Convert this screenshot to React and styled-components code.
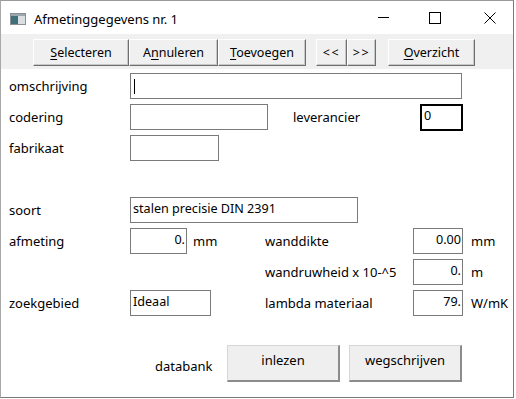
import React from "react";
import styled, { createGlobalStyle } from "styled-components";

const GlobalStyle = createGlobalStyle`
  html, body {
    margin: 0;
    padding: 0;
    background: #ffffff;
  }
  body {
    font-family: "Noto Sans", "Segoe UI", "Liberation Sans", sans-serif;
    color: #000;
  }
`;

const Window = styled.div`
  width: 514px;
  height: 398px;
  box-sizing: border-box;
  display: flex;
  flex-direction: column;
  background: #fff;
  border-top: 1px solid #9a9a9a;
  border-left: 1px solid #a8a8a8;
  border-right: 1px solid #7a7a7a;
  border-bottom: 1px solid #7a7a7a;
  overflow: hidden;
`;

const TitleBar = styled.div`
  height: 33px;
  display: flex;
  align-items: center;
  background: #fff;
  flex: none;
`;

const AppIcon = styled.div`
  width: 16px;
  height: 12px;
  margin: 3px 8px 0 9px;
  display: flex;
`;

const Caption = styled.span`
  font-size: 13px;
  flex: 1;
  margin-top: 3px;
`;

const CaptionButton = styled.div`
  width: 52px;
  height: 33px;
  box-sizing: border-box;
  padding-left: ${(p) => p.$shift || 0}px;
  display: flex;
  align-items: center;
  justify-content: center;
`;

const Toolbar = styled.div`
  height: 35px;
  flex: none;
  background: #f0f0f0;
  display: flex;
  align-items: flex-start;
  padding: 5px 0 0 32px;
  box-sizing: border-box;
`;

const ToolButton = styled.button`
  width: ${(p) => p.$w}px;
  height: 27px;
  margin-left: ${(p) => p.$gap || 0}px;
  box-sizing: border-box;
  padding: 0;
  background: #f0f0f0;
  border-top: 1px solid #ffffff;
  border-left: 1px solid #ffffff;
  border-right: 1px solid #6e6e6e;
  border-bottom: 1px solid #6e6e6e;
  box-shadow: inset -1px -1px 0 #c8c8c8;
  font-family: "Noto Sans", "Segoe UI", sans-serif;
  font-size: 12.5px;
  color: #000;
  letter-spacing: ${(p) => (p.$spaced ? "1.5px" : "0")};
`;

const Content = styled.div`
  flex: 1;
  padding: 4px 0 0 8px;
  display: flex;
  flex-direction: column;
  gap: 5px;
`;

const Row = styled.div`
  height: 26px;
  display: flex;
  align-items: center;
  font-size: 13px;
`;

const Label = styled.span`
  width: ${(p) => p.$w || 121}px;
  flex: none;
  padding-bottom: 1px;
`;

const Cell = styled.div`
  width: ${(p) => p.$w}px;
  flex: none;
  display: flex;
  align-items: center;
`;

const Field = styled.div`
  width: ${(p) => p.$w}px;
  height: ${(p) => (p.$focus ? 27 : 26)}px;
  box-sizing: border-box;
  flex: none;
  border: ${(p) => (p.$focus ? "2px solid #000" : "1px solid #7a7a7a")};
  background: #fff;
  display: flex;
  align-items: center;
  justify-content: ${(p) => (p.$right ? "flex-end" : "flex-start")};
  padding: ${(p) => (p.$right ? "0 1px 3px 0" : "0 0 3px 2px")};
  font-size: 12.6px;
  white-space: nowrap;
  overflow: hidden;
`;

const Caret = styled.span`
  width: 1px;
  height: 15px;
  background: #000;
  margin: 3px 0 0 1px;
`;

const Unit = styled.span`
  margin-left: ${(p) => p.$gap || 8}px;
  padding-bottom: 1px;
`;

const Footer = styled.div`
  display: flex;
  align-items: flex-start;
  margin-top: 24px;
  padding-left: 146px;
  font-size: 13px;
`;

const FooterLabel = styled.span`
  width: 72px;
  margin-top: 12px;
`;

const BigButton = styled.button`
  width: 113px;
  height: 37px;
  margin-right: 9px;
  box-sizing: border-box;
  padding: 0 0 6px 0;
  background: #efefef;
  border-top: 1px solid #d6d6d6;
  border-left: 1px solid #d6d6d6;
  border-right: 2px solid #8c8c8c;
  border-bottom: 2px solid #8c8c8c;
  font-family: "Noto Sans", "Segoe UI", sans-serif;
  font-size: 13px;
  color: #000;
`;

const U = styled.span`
  text-decoration: underline;
  text-underline-offset: 2px;
`;

const WindowIcon = () => (
  <svg width="16" height="12" viewBox="0 0 16 12">
    <rect x="0.5" y="0.5" width="15" height="11" fill="#d9dee2" stroke="#8a9096" />
    <rect x="1" y="1" width="7" height="10" fill="#3f6f78" />
    <rect x="1" y="1" width="14" height="2" fill="#9aa7ae" />
  </svg>
);

const Minimize = () => (
  <svg width="11" height="11" viewBox="0 0 11 11">
    <line x1="0" y1="5.5" x2="11" y2="5.5" stroke="#000" strokeWidth="1" />
  </svg>
);

const Maximize = () => (
  <svg width="12" height="12" viewBox="0 0 12 12">
    <rect x="0.5" y="0.5" width="11" height="11" fill="none" stroke="#000" strokeWidth="1" />
  </svg>
);

const Close = () => (
  <svg width="12" height="12" viewBox="0 0 12 12">
    <path d="M0.5 0.5 L11.5 11.5 M11.5 0.5 L0.5 11.5" stroke="#000" strokeWidth="1" />
  </svg>
);

export default function App() {
  return (
    <>
      <GlobalStyle />
      <Window>
        <TitleBar>
          <AppIcon>
            <WindowIcon />
          </AppIcon>
          <Caption>Afmetinggegevens nr. 1</Caption>
          <CaptionButton>
            <Minimize />
          </CaptionButton>
          <CaptionButton>
            <Maximize />
          </CaptionButton>
          <CaptionButton $shift={6}>
            <Close />
          </CaptionButton>
        </TitleBar>

        <Toolbar>
          <ToolButton $w={96}>
            <U>S</U>electeren
          </ToolButton>
          <ToolButton $w={89}>
            A<U>n</U>nuleren
          </ToolButton>
          <ToolButton $w={88}>
            <U>T</U>oevoegen
          </ToolButton>
          <ToolButton $w={31} $gap={10} $spaced>
            &lt;&lt;
          </ToolButton>
          <ToolButton $w={29} $spaced>
            &gt;&gt;
          </ToolButton>
          <ToolButton $w={87} $gap={12}>
            <U>O</U>verzicht
          </ToolButton>
        </Toolbar>

        <Content>
          <Row>
            <Label>omschrijving</Label>
            <Field $w={332}>
              <Caret />
            </Field>
          </Row>
          <Row>
            <Label>codering</Label>
            <Cell $w={163}>
              <Field $w={138} />
            </Cell>
            <Label $w={127}>leverancier</Label>
            <Field $w={43} $focus>
              0
            </Field>
          </Row>
          <Row>
            <Label>fabrikaat</Label>
            <Field $w={89} />
          </Row>
          <Row />
          <Row>
            <Label>soort</Label>
            <Field $w={228}>stalen precisie DIN 2391</Field>
          </Row>
          <Row>
            <Label>afmeting</Label>
            <Cell $w={135}>
              <Field $w={57} $right>
                0.
              </Field>
              <Unit $gap={6}>mm</Unit>
            </Cell>
            <Label $w={148}>wanddikte</Label>
            <Field $w={50} $right>
              0.00
            </Field>
            <Unit>mm</Unit>
          </Row>
          <Row>
            <Cell $w={256} />
            <Label $w={148}>wandruwheid x 10-^5</Label>
            <Field $w={50} $right>
              0.
            </Field>
            <Unit>m</Unit>
          </Row>
          <Row>
            <Label>zoekgebied</Label>
            <Cell $w={135}>
              <Field $w={81}>Ideaal</Field>
            </Cell>
            <Label $w={148}>lambda materiaal</Label>
            <Field $w={50} $right>
              79.
            </Field>
            <Unit>W/mK</Unit>
          </Row>
          <Footer>
            <FooterLabel>databank</FooterLabel>
            <BigButton>inlezen</BigButton>
            <BigButton>wegschrijven</BigButton>
          </Footer>
        </Content>
      </Window>
    </>
  );
}
